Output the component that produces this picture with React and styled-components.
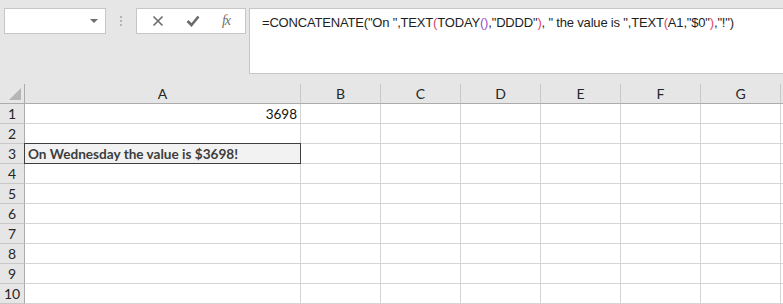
import React from 'react';
import styled, { createGlobalStyle } from 'styled-components';

const GlobalStyle = createGlobalStyle`
  html, body {
    margin: 0;
    padding: 0;
    background: #ffffff;
    overflow: hidden;
  }
`

const Sheet = styled.div`
  width: 783px;
  height: 304px;
  overflow: hidden;
  font-family: "Lato", "Liberation Sans", sans-serif;
`

const Toolbar = styled.div`
  height: 84px;
  background: #e6e6e6;
  display: flex;
  align-items: flex-start;
  padding: 8px 0 0 4px;
  box-sizing: border-box;
`

const NameBox = styled.div`
  width: 102px;
  height: 26px;
  box-sizing: border-box;
  background: #fff;
  border: 1px solid #c6c6c6;
  display: flex;
  justify-content: flex-end;
  align-items: center;
  padding-right: 7px;
`

const Caret = styled.div`
  width: 0;
  height: 0;
  border-left: 4px solid transparent;
  border-right: 4px solid transparent;
  border-top: 4px solid #6f6f6f;
  margin-top: -1px;
`

const Grip = styled.div`
  width: 30px;
  height: 26px;
  display: flex;
  flex-direction: column;
  align-items: center;
  justify-content: center;
  gap: 2px;
`

const Dot = styled.span`
  width: 2px;
  height: 2px;
  background: #b4b4b4;
`

const ButtonBox = styled.div`
  width: 110px;
  height: 26px;
  box-sizing: border-box;
  background: #fff;
  border: 1px solid #c6c6c6;
  display: flex;
  align-items: center;
  justify-content: space-around;
  padding: 0 4px;
`

const FxLabel = styled.span`
  font-family: "Liberation Serif", serif;
  font-style: italic;
  font-size: 14px;
  color: #707070;
  letter-spacing: -1px;
`

const FormulaBar = styled.div`
  flex: 1;
  height: 66px;
  margin-left: 3px;
  box-sizing: border-box;
  background: #fff;
  border: 1px solid #c6c6c6;
  border-right: none;
  padding: 6px 0 0 12px;
  font-family: "Liberation Sans", sans-serif;
  font-size: 13px;
  letter-spacing: -0.18px;
  color: #1e1e1e;
  white-space: nowrap;
  overflow: hidden;
`

const Paren = styled.span`
  color: ${p => p.$tone === 'red' ? '#e0446f' : p.$tone === 'purple' ? '#9a4fc8' : 'inherit'};
`

const Grid = styled.div`
  display: grid;
  grid-template-columns: 25px 276px repeat(6, 80px) 1fr;
  grid-auto-rows: 20px;
`

const Corner = styled.div`
  background: #e6e6e6;
  border-right: 1px solid #ababab;
  border-bottom: 1px solid #ababab;
  box-sizing: border-box;
  display: flex;
  align-items: flex-end;
  justify-content: flex-end;
  padding: 0 3px 3px 0;
`

const Triangle = styled.div`
  width: 0;
  height: 0;
  border-left: 12px solid transparent;
  border-bottom: 12px solid #b5b5b5;
`

const ColHead = styled.div`
  background: #e6e6e6;
  border-right: 1px solid ${p => p.$last ? '#e6e6e6' : '#c8c8c8'};
  border-bottom: 1px solid #ababab;
  box-sizing: border-box;
  display: flex;
  align-items: center;
  justify-content: center;
  font-size: 14px;
  color: #262626;
`

const RowHead = styled.div`
  background: #e6e6e6;
  border-right: 1px solid #ababab;
  border-bottom: 1px solid #c8c8c8;
  box-sizing: border-box;
  display: flex;
  align-items: center;
  justify-content: center;
  font-size: 14px;
  color: #262626;
`

const Cell = styled.div`
  background: ${p => p.$boxed ? '#f2f2f2' : '#fff'};
  border-right: 1px solid #d4d4d4;
  border-bottom: 1px solid #d4d4d4;
  box-sizing: border-box;
  display: flex;
  align-items: center;
  justify-content: ${p => p.$align === 'right' ? 'flex-end' : 'flex-start'};
  padding: 0 3px;
  font-size: ${p => p.$bold ? '13.6px' : '13.5px'};
  font-weight: ${p => p.$bold ? 700 : 400};
  color: ${p => p.$bold ? '#3d3d3d' : '#111'};
  white-space: nowrap;
  overflow: visible;
  ${p => p.$boxed && `
    outline: 1px solid #3f3f3f;
    outline-offset: -1px;
    margin: -1px 0 0 -1px;
    border: none;
    padding-left: 4px;
    position: relative;
  `}
`

const columns = ['A', 'B', 'C', 'D', 'E', 'F', 'G', ''];

const cellData = {
  '1A': { text: '3698', align: 'right' },
  '3A': { text: 'On Wednesday the value is $3698!', bold: true, boxed: true },
};

const CloseIcon = () => (
  <svg width="12" height="12" viewBox="0 0 12 12">
    <path d="M1.5 1.5 L10.5 10.5 M10.5 1.5 L1.5 10.5" stroke="#6b6b6b" strokeWidth="1.6" fill="none" />
  </svg>
);

const CheckIcon = () => (
  <svg width="14" height="12" viewBox="0 0 14 12">
    <path d="M1.5 6 L5.5 10 L12.5 1.5" stroke="#6b6b6b" strokeWidth="2.6" fill="none" />
  </svg>
);

const App = () => {
  const rows = Array.from({ length: 10 }, (_, i) => i + 1);
  return (
    <Sheet>
      <GlobalStyle />
      <Toolbar>
        <NameBox><Caret /></NameBox>
        <Grip><Dot /><Dot /><Dot /></Grip>
        <ButtonBox>
          <CloseIcon />
          <CheckIcon />
          <FxLabel>fx</FxLabel>
        </ButtonBox>
        <FormulaBar>
          =CONCATENATE("On ",TEXT<Paren $tone="red">(</Paren>TODAY<Paren $tone="purple">()</Paren>,"DDDD"<Paren $tone="red">)</Paren>, " the value is ",TEXT<Paren $tone="red">(</Paren>A1,"$0"<Paren $tone="red">)</Paren>,"!")
        </FormulaBar>
      </Toolbar>
      <Grid>
        <Corner><Triangle /></Corner>
        {columns.map((c, i) => (
          <ColHead key={i} $last={c === ''}>{c}</ColHead>
        ))}
        {rows.map(r => (
          <React.Fragment key={r}>
            <RowHead>{r}</RowHead>
            {columns.map((c, i) => {
              const d = cellData[r + c];
              return (
                <Cell key={i} $align={d?.align} $bold={d?.bold} $boxed={d?.boxed}>
                  {d?.text}
                </Cell>
              );
            })}
          </React.Fragment>
        ))}
      </Grid>
    </Sheet>
  );
};

export default App;
